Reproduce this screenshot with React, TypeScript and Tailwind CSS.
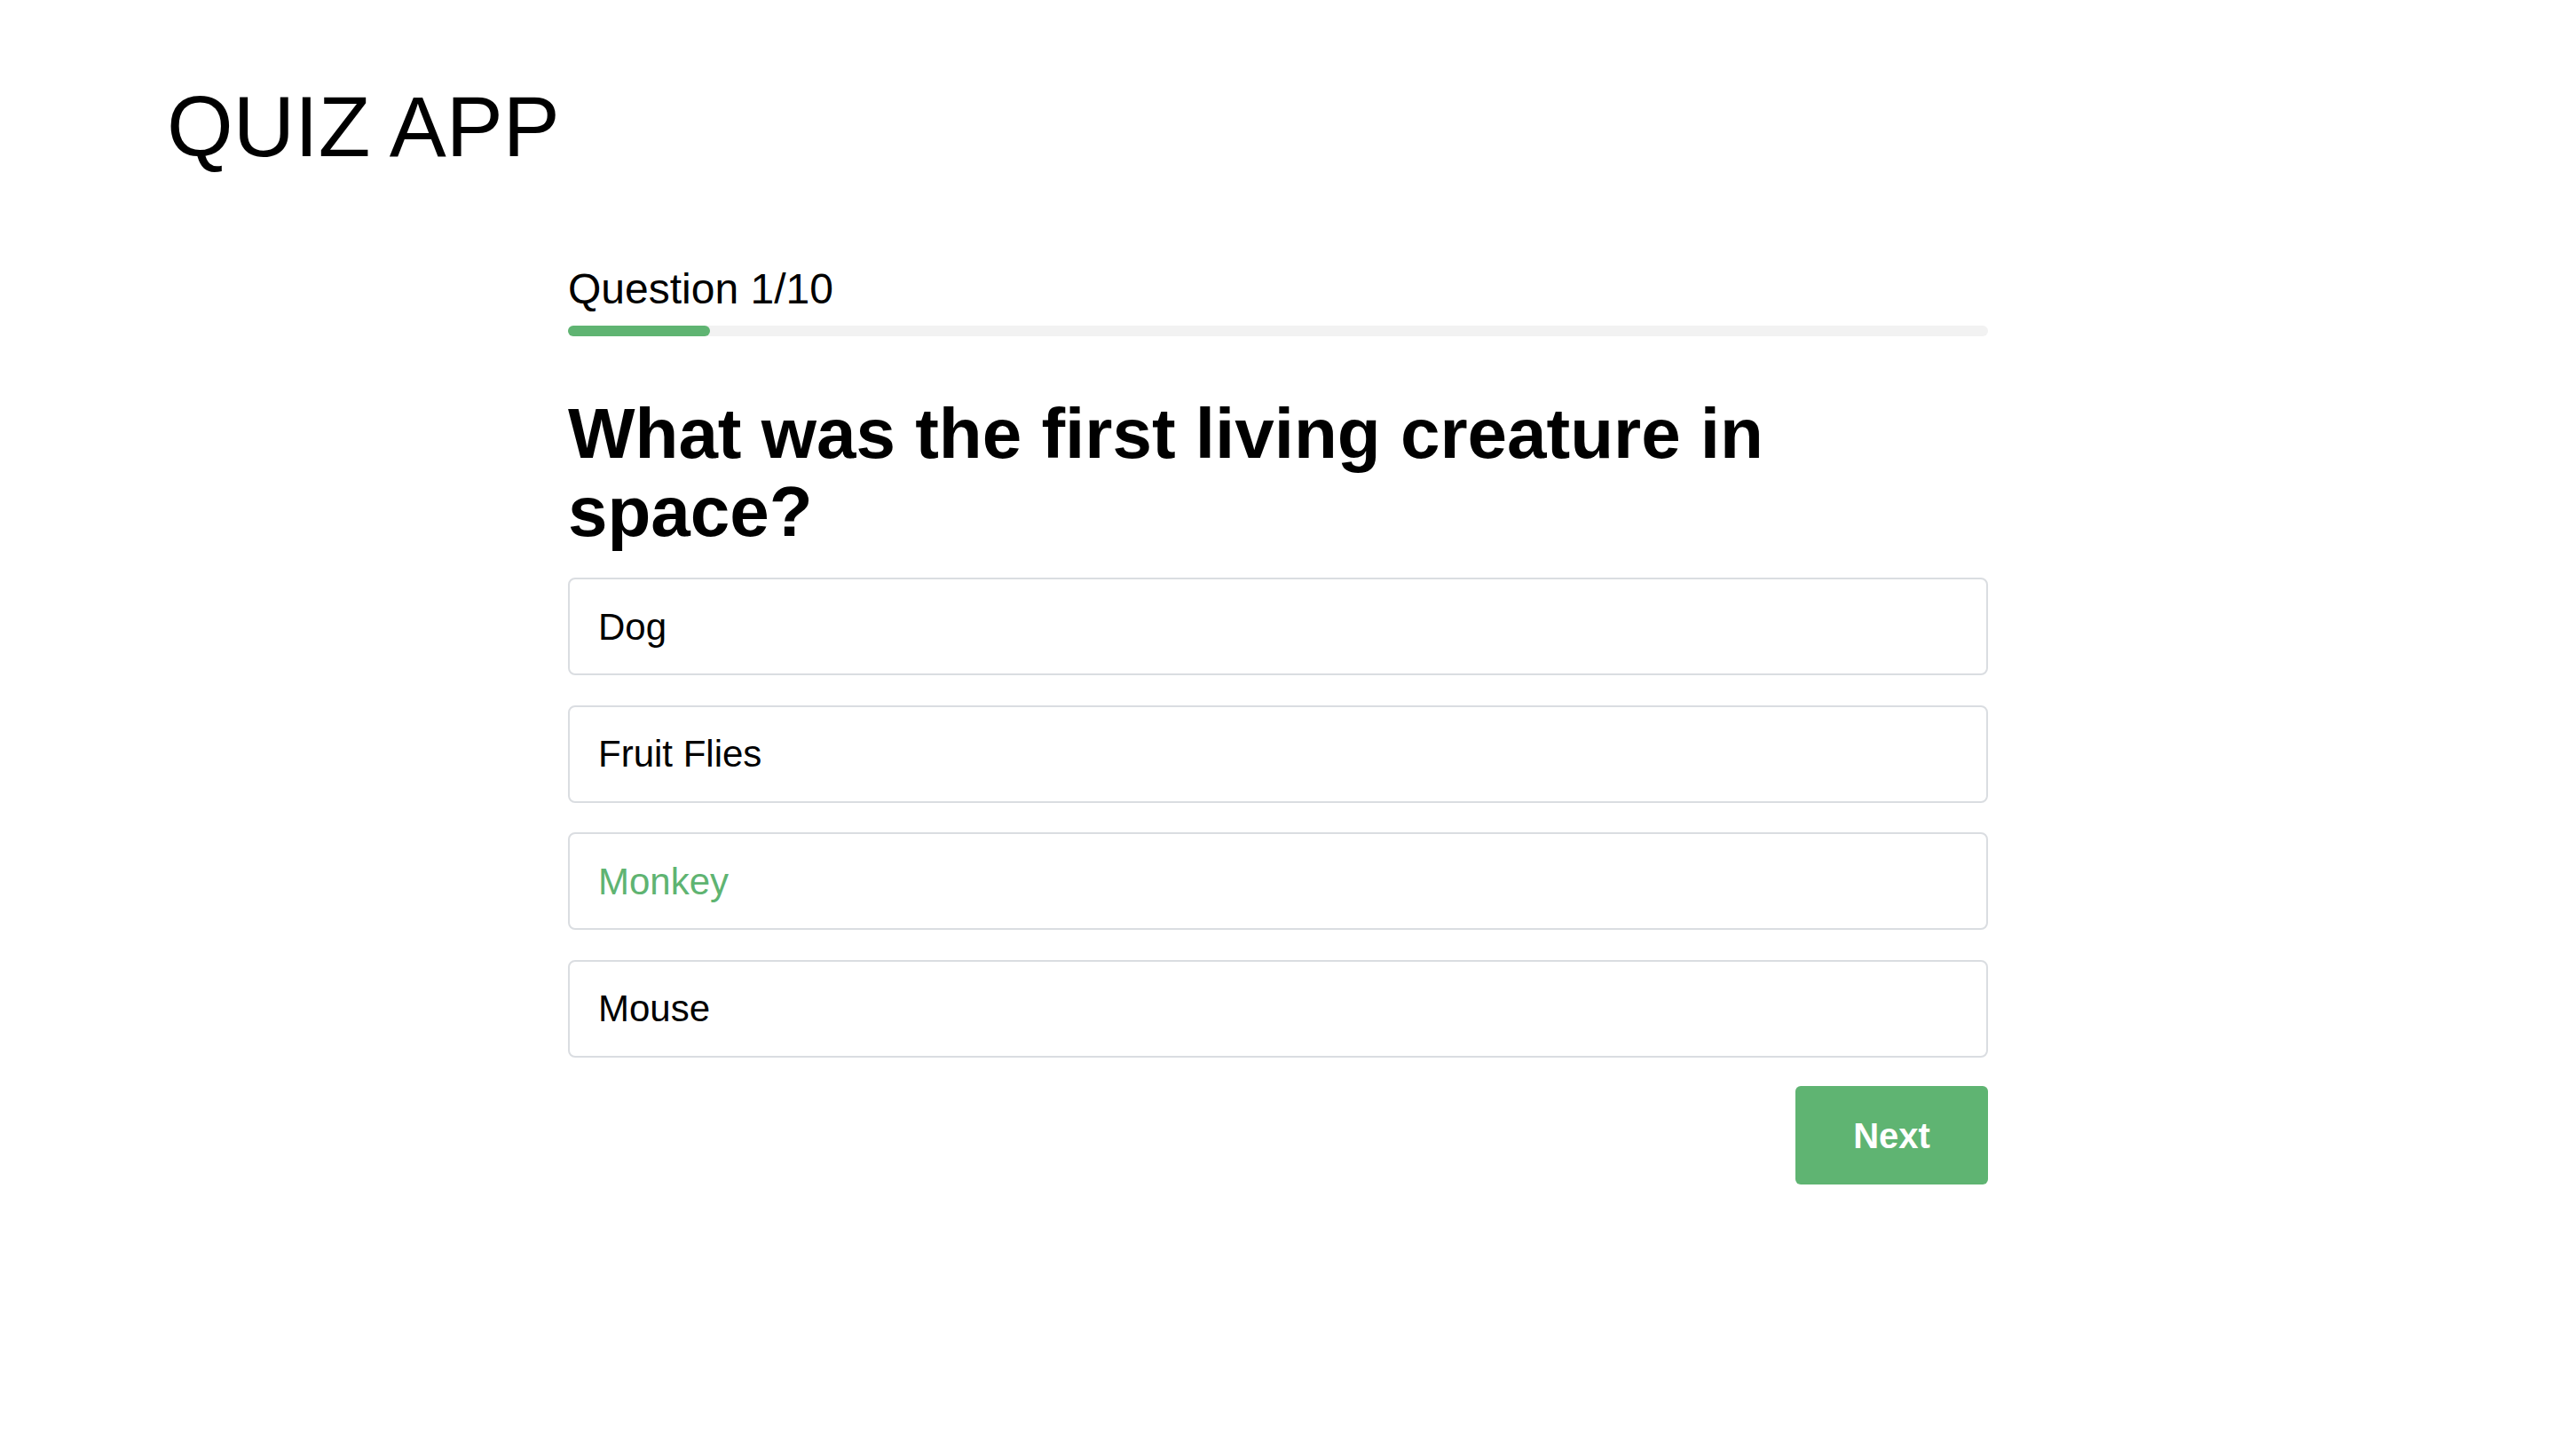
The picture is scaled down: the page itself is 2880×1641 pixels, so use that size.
export default function App() {
  const options = ["Dog", "Fruit Flies", "Monkey", "Mouse"];
  const selected = "Monkey";
  return (
    <div className="min-h-screen w-full bg-white text-black font-['Liberation_Sans',Arial,Helvetica,sans-serif]">
      <header className="pl-[188px] pt-[95px]">
        <h1 className="text-[96px] leading-[96px] font-normal">QUIZ APP</h1>
      </header>
      <main className="mx-auto mt-[111px] w-[1600px]">
        <div className="text-[48px] leading-[48px]">Question 1/10</div>
        <div className="mt-[17px] h-[12px] w-full rounded-full bg-[#f2f2f2]">
          <div className="h-full rounded-full bg-[#5fb472]" style={{ width: "10%" }} />
        </div>
        <h2 className="mt-[66px] text-[80px] leading-[88px] font-bold">
          What was the first living creature in space?
        </h2>
        <div className="mt-[30px] flex flex-col gap-[33.5px]">
          {options.map((o) => (
            <div
              key={o}
              className={
                o === selected
                  ? "flex h-[110px] items-center rounded-lg border-2 border-[#dadde1] bg-white pl-[32px] text-[42px] text-[#5fb472]"
                  : "flex h-[110px] items-center rounded-lg border-2 border-[#dadde1] bg-white pl-[32px] text-[42px] text-black"
              }
            >
              {o}
            </div>
          ))}
        </div>
        <div className="mt-[32.5px] flex justify-end">
          <button className="flex h-[111px] w-[217px] items-center justify-center rounded-[6px] bg-[#5fb472] text-[40px] font-bold text-white">
            Next
          </button>
        </div>
      </main>
    </div>
  );
}
